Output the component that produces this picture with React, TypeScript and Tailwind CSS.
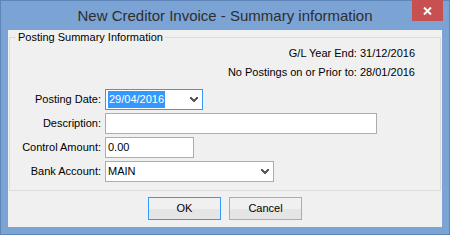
import React from "react";

function Chevron() {
  return (
    <svg width="8" height="6" viewBox="0 0 8 6" className="shrink-0">
      <path d="M0 0h2v1h1v1h2V1h1V0h2v2H7v1H6v1H5v1H3V4H2V3H1V2H0z" fill="#5a5a5a" />
    </svg>
  );
}

function Row({ label, children }: { label: string; children: React.ReactNode }) {
  return (
    <>
      <div className="flex h-[21px] items-center justify-end text-black">{label}</div>
      <div className="flex h-[21px] items-center">{children}</div>
    </>
  );
}

export default function App() {
  return (
    <div
      className="flex h-[235px] w-[450px] flex-col border border-[#5f86b8] bg-[#7ba3d4] text-[11px]"
      style={{ fontFamily: '"Liberation Sans", Arial, sans-serif' }}
    >
      <div className="relative flex h-[29px] items-center justify-center">
        <span className="pt-[1px] text-[15px] text-[#2e2e2e]">New Creditor Invoice - Summary information</span>
        <div className="absolute right-[6px] top-[-1px] flex h-[21px] w-[31px] items-center justify-center bg-[#c75050]">
          <svg width="9" height="8" viewBox="0 0 9 8">
            <path d="M1 0.5L8 7.5M8 0.5L1 7.5" stroke="white" strokeWidth="2" />
          </svg>
        </div>
      </div>
      <div className="mx-[7px] flex h-[197px] flex-col bg-[#f0f0f0]">
        <fieldset className="mx-[1px] border border-[#dcdcdc] px-0 pb-[8px]">
          <legend className="ml-[6px] px-[2px] leading-[14px] text-black">Posting Summary Information</legend>
          <div className="flex flex-col items-end pr-[25px] leading-[19px] text-black">
            <div>G/L Year End: 31/12/2016</div>
            <div>No Postings on or Prior to: 28/01/2016</div>
          </div>
          <div className="mt-[7px] grid grid-cols-[91px_1fr] gap-x-[4px] gap-y-[3px]">
            <Row label="Posting Date:">
              <div className="flex h-[21px] w-[98px] items-center justify-between border border-[#3399ff] bg-white pl-[2px] pr-[4px]">
                <span className="bg-[#3399ff] px-[1px] leading-[17px] text-white">29/04/2016</span>
                <Chevron />
              </div>
            </Row>
            <Row label="Description:">
              <div className="h-[21px] w-[272px] border border-[#abadb3] bg-white" />
            </Row>
            <Row label="Control Amount:">
              <div className="flex h-[21px] w-[89px] items-center border border-[#abadb3] bg-white px-[2px] text-black">0.00</div>
            </Row>
            <Row label="Bank Account:">
              <div className="flex h-[21px] w-[169px] items-center justify-between border border-[#abadb3] bg-white pl-[2px] pr-[4px] text-black">
                <span>MAIN</span>
                <Chevron />
              </div>
            </Row>
          </div>
        </fieldset>
        <div className="mt-[6px] flex justify-center gap-[8px]">
          <button className="flex h-[23px] w-[73px] items-center justify-center border border-[#3399ff] bg-[linear-gradient(#f0f0f0_50%,#e5e5e5_50%)] text-black">
            OK
          </button>
          <button className="flex h-[23px] w-[73px] items-center justify-center border border-[#acacac] bg-[linear-gradient(#f0f0f0_50%,#e5e5e5_50%)] text-black">
            Cancel
          </button>
        </div>
      </div>
    </div>
  );
}
